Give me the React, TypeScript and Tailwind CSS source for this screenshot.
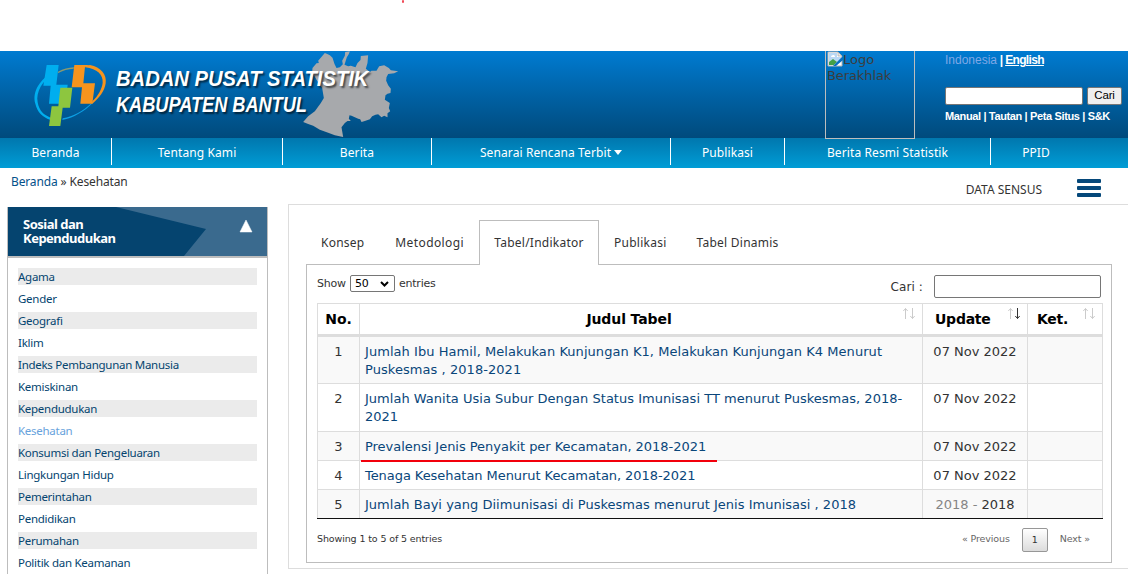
import type { ReactNode } from "react";

const nav = [
  { label: "Beranda", cls: "w-[112px]" },
  { label: "Tentang Kami", cls: "w-[171px]" },
  { label: "Berita", cls: "w-[149px]" },
  { label: "Senarai Rencana Terbit", cls: "w-[239px]", caret: true },
  { label: "Publikasi", cls: "w-[114px]" },
  { label: "Berita Resmi Statistik", cls: "w-[206px]" },
];

const topics = [
  "Agama", "Gender", "Geografi", "Iklim", "Indeks Pembangunan Manusia", "Kemiskinan",
  "Kependudukan", "Kesehatan", "Konsumsi dan Pengeluaran", "Lingkungan Hidup",
  "Pemerintahan", "Pendidikan", "Perumahan", "Politik dan Keamanan",
];

type Row = { lines: string[]; date: ReactNode; h: string; tracking: string; marked?: boolean };

const rows: Row[] = [
  {
    lines: ["Jumlah Ibu Hamil, Melakukan Kunjungan K1, Melakukan Kunjungan K4 Menurut", "Puskesmas , 2018-2021"],
    date: "07 Nov 2022",
    h: "h-[47px]",
    tracking: "tracking-[0.055px]",
  },
  {
    lines: ["Jumlah Wanita Usia Subur Dengan Status Imunisasi TT menurut Puskesmas, 2018-", "2021"],
    date: "07 Nov 2022",
    h: "h-12",
    tracking: "tracking-[0.015px]",
  },
  {
    lines: ["Prevalensi Jenis Penyakit per Kecamatan, 2018-2021"],
    date: "07 Nov 2022",
    h: "h-[29px]",
    tracking: "tracking-[-0.03px]",
    marked: true,
  },
  {
    lines: ["Tenaga Kesehatan Menurut Kecamatan, 2018-2021"],
    date: "07 Nov 2022",
    h: "h-[29px]",
    tracking: "tracking-[-0.06px]",
  },
  {
    lines: ["Jumlah Bayi yang Diimunisasi di Puskesmas menurut Jenis Imunisasi , 2018"],
    date: (<><span className="text-[#858585]">2018 - </span>2018</>),
    h: "h-[29px]",
    tracking: "tracking-[0.01px]",
  },
];

function Logo() {
  return (
    <svg viewBox="0 0 240 210" className="h-[70px] w-20 shrink-0">
      <path d="M70 36 C32 55 5 95 16 131 C22 157 38 171 60 179 L62 173 C42 166 27 152 23 127 C17 96 38 60 70 42Z" fill="#00aeef" />
      <path d="M97 180 C130 174 164 154 188 129 L182 131 C160 152 130 169 98 175Z" fill="#0c9fe4" />
      <path d="M160 20 L180 15 C213 22 231 43 227 70 C224 93 207 115 185 133 L187 124 C204 108 216 87 218 68 C220 45 202 26 166 22Z" fill="#f7941e" />
      <path d="M84 35 C100 26 115 23 132 22 L131 26 C114 27 99 31 83 40Z" fill="#8a9a72" />
      <path d="M50 15H86L79 74H113L106 131H57L62 77H40Z" fill="#00aeef" />
      <path d="M133 15H180L165 20L160 70H195L187 131H151L156 82H125Z" fill="#f7941e" />
      <path d="M91 83H127L120 143H98L91 198H57L65 139H85Z" fill="#8dc63f" />
    </svg>
  );
}

function RegionMap() {
  return (
    <svg viewBox="0 0 302 267" className="absolute left-[298px] top-[-3px] h-[89px] w-[101px]">
      <path
        d="M141 12L155 10L152 18L146 28L139 50L150 55L158 53L172 58L178 45L187 36L188 24L210 22L208 45L203 62L215 72L220 68L235 68L243 55L258 52L272 60L278 67L300 70L288 76L270 78L265 88L264 98L270 112L278 122L277 135L268 137L262 142L260 155L275 165L272 180L276 190L268 196L268 208L258 203L250 208L245 203L240 199L232 200L222 205L215 214L200 219L190 222L186 214L180 212L160 203L154 202L152 212L158 219L148 219L140 225L130 238L135 267L110 262L90 254L65 245L45 233L30 228L15 222L30 205L50 190L68 165L77 150L72 120L55 95L42 72L43 60L55 46L62 45L60 38L80 15L89 19L95 22L103 29L109 48L115 60L125 58L134 49L132 38L140 23Z"
        fill="#a7a9ac"
      />
    </svg>
  );
}

function BrokenImage() {
  return (
    <svg viewBox="0 0 16 16" className="inline-block h-4 w-4 align-[-3px]">
      <path d="M1 1H11L15 5V15H1Z" fill="#fff" stroke="#b5b5b5" />
      <path d="M2 2H10V6H14V9L8 13H2Z" fill="#b9d8f4" />
      <path d="M2 14V11L6 8L10 11L7 14Z" fill="#43a047" />
      <path d="M4 6C4 4 8 3 8 6Z" fill="#fff" />
      <path d="M16 5L6 15H9L16 9Z" fill="#0870c3" />
      <path d="M11 1V5H15Z" fill="#e8e8e8" stroke="#a8a8a8" strokeWidth=".7" />
    </svg>
  );
}

function Sort({ desc = false }: { desc?: boolean }) {
  return (
    <svg viewBox="0 0 12 13" className="h-[13px] w-3" fill="none">
      <path d="M2.500 12V1.500M.3 4L2.500 1.500L4.700 4" stroke="#cbcbcb" />
      <path d="M9.500 1V11.500M7.300 9L9.500 11.500L11.700 9" stroke={desc ? "#333" : "#cbcbcb"} />
    </svg>
  );
}

function Header() {
  return (
    <header className="relative z-10 flex h-[87px] bg-linear-to-b from-[#007bd1] to-[#004a7c]">
      <RegionMap />
      <div className="relative flex w-[825px] pl-[30px] pt-[9px]">
        <Logo />
        <div className="pl-[6px] pt-[6px] font-['Liberation_Sans'] text-[22px] font-bold italic leading-[26px] text-white [text-shadow:2px_2px_2px_#00000099]">
          <div className="origin-left scale-x-[0.918] whitespace-nowrap">BADAN PUSAT STATISTIK</div>
          <div className="origin-left scale-x-[0.825] whitespace-nowrap">KABUPATEN BANTUL</div>
        </div>
      </div>
      <div className="h-[88px] w-[90px] shrink-0 border border-t-0 border-[#bdbdbd] pl-px font-['DejaVu_Sans'] text-[13px] leading-4 text-[#3d3d3d]">
        <div className="whitespace-nowrap"><BrokenImage />Logo</div>
        <div className="tracking-[-0.1px]">Berakhlak</div>
      </div>
      <div className="flex flex-col pl-[30px] font-['Liberation_Sans'] text-white">
        <div className="pt-[2px] text-[12px] leading-[14px]">
          <span className="text-[#7fa8e6]">Indonesia</span>
          <b className="tracking-[-0.65px]"> | <span className="underline">English</span></b>
        </div>
        <div className="mt-5 flex gap-1">
          <div className="h-[18px] w-[138px] rounded-[2px] border border-[#767676] bg-white" />
          <div className="flex h-[18px] w-[35px] items-center justify-center rounded-[2px] border border-[#767676] bg-[#efefef] text-[11.5px] tracking-[-0.2px] text-black">Cari</div>
        </div>
        <div className="mt-[5px] whitespace-nowrap text-[11px] font-bold leading-[13px] tracking-[-0.36px]">Manual | Tautan | Peta Situs | S&amp;K</div>
      </div>
    </header>
  );
}

function NavBar() {
  return (
    <nav className="flex h-[30px] bg-linear-to-b from-[#0077ae] to-[#009dd6] font-['Noto_Sans'] text-[12px] tracking-[0.1px] text-white">
      {nav.map((n) => (
        <div key={n.label} className={`${n.cls} flex h-[27px] items-center justify-center border-r border-white pt-[2px] whitespace-nowrap`}>
          {n.label}
          {n.caret && (
            <svg viewBox="0 0 8 5" className="ml-[3px] h-[5px] w-2"><path d="M0 0H8L4 5Z" fill="#fff" /></svg>
          )}
        </div>
      ))}
      <div className="flex h-[27px] w-[90px] items-center justify-center pt-[2px]">PPID</div>
    </nav>
  );
}

function Sidebar() {
  return (
    <aside className="mt-[2px] h-[380px] w-[261px] shrink-0 border-x border-[#bdbdbd] font-['Noto_Sans']">
      <div className="relative h-[51px] border-b-2 border-[#bdbdbd] bg-[#05446f]">
        <svg viewBox="0 0 259 49" className="absolute inset-0 h-[49px] w-[259px]">
          <path d="M108 0H259V49H176L198 22Z" fill="#3a6a8e" />
          <path d="M232 25L238 13L244 25Z" fill="#fff" stroke="#fff" strokeWidth=".5" />
        </svg>
        <div className="relative pl-[15px] pt-[10px] text-[13px] font-bold leading-[14px] tracking-[-0.5px] text-white">
          Sosial dan<br />Kependudukan
        </div>
      </div>
      <ul className="flex flex-col gap-[5px] px-[10px] pt-[10px]">
        {topics.map((t) => (
          <li key={t} className="h-[17px] whitespace-nowrap text-[11.5px] leading-[18px] tracking-[-0.27px] text-[#04446f] odd:bg-[#ebebeb]">
            <span className={t === "Kesehatan" ? "text-[#67a2dc]" : ""}>{t}</span>
          </li>
        ))}
      </ul>
    </aside>
  );
}

function TablePanel() {
  return (
    <div className="h-[298px] w-[806px] border border-t-0 border-[#bdbdbd] pl-[10px] font-['DejaVu_Sans'] text-[#333]">
      <div className="flex h-[38px] w-[784px] justify-between text-[11px]">
        <div className="mt-[10px] flex h-[17px] items-center gap-1 tracking-[-0.2px]">
          <span className="pt-[2px]">Show</span>
          <div className="flex h-[17px] w-[45px] items-center justify-between rounded-[2px] border border-[#767676] pl-1 pr-[5px] text-black">
            <span className="pt-[2px]">50</span>
            <svg viewBox="0 0 9 6" className="h-[6px] w-[9px]"><path d="M1 1L4.500 4.500L8 1" fill="none" stroke="#000" strokeWidth="2" /></svg>
          </div>
          <span className="pt-[2px]">entries</span>
        </div>
        <div className="mt-[10px] flex h-[23px] items-center gap-[11px] text-[12px]">
          <span className="tracking-[0.1px]">Cari :</span>
          <div className="h-[23px] w-[167px] rounded-[2px] border border-[#767676]" />
        </div>
      </div>
      <div className="w-[786px]">
        <div className="grid h-[34px] grid-cols-[42px_563px_105px_76px] border-b-[3px] border-t border-[#ddd] text-[14px] font-bold tracking-[-0.1px] text-black">
          <div className="flex items-center justify-center border-l border-[#ddd]">No.</div>
          <div className="relative flex items-center justify-center border-l border-[#ddd] pr-[24px]">
            Judul Tabel
            <span className="absolute right-[7px] top-[3px]"><Sort /></span>
          </div>
          <div className="relative flex items-center border-l border-[#ddd] pl-3 tracking-[-0.25px]">
            Update
            <span className="absolute right-[7px] top-[3px]"><Sort desc /></span>
          </div>
          <div className="relative flex items-center border-x border-[#ddd] pl-[9px] tracking-[-0.25px]">
            Ket.
            <span className="absolute right-[7px] top-[3px]"><Sort /></span>
          </div>
        </div>
        {rows.map((r, i) => (
          <div
            key={i}
            className={`${r.h} ${r.marked ? "z-10" : ""} relative grid grid-cols-[42px_563px_105px_76px] border-b border-[#ddd] text-[13px] leading-[18px] last:border-[#111] odd:bg-white even:bg-[#f9f9f9]`}
          >
            <div className="border-l border-[#ddd] pt-[6px] text-center">{i + 1}</div>
            <div className={`${r.tracking} border-l border-[#ddd] pl-[5px] pt-[6px] whitespace-nowrap text-[#09467a]`}>
              {r.lines.map((l) => (<div key={l}>{l}</div>))}
            </div>
            <div className="border-l border-[#ddd] pt-[6px] text-center whitespace-nowrap">{r.date}</div>
            <div className="border-x border-[#ddd]" />
            {r.marked && <div className="absolute bottom-[-2px] left-[44px] h-[2px] w-[356px] bg-[#f2000c]" />}
          </div>
        ))}
      </div>
      <div className="flex h-10 w-[785px] items-center text-[9.5px] tracking-[-0.12px]">
        <span>Showing 1 to 5 of 5 entries</span>
        <span className="ml-auto text-[#666]">« Previous</span>
        <span className="ml-3 mt-[2px] flex h-6 w-[26px] items-center justify-center rounded-[2px] border border-[#979797] bg-linear-to-b from-white to-[#dcdcdc]">1</span>
        <span className="ml-3 mr-[12px] text-[#666]">Next »</span>
      </div>
    </div>
  );
}

function Tabs() {
  return (
    <div className="flex h-[45px] w-[806px] font-['Noto_Sans'] text-[12px] tracking-[0.25px] text-[#333]">
      <div className="flex w-[173px] justify-between border-b border-[#bdbdbd] pl-[15px] pr-[15px] leading-[46px]">
        <span>Konsep</span>
        <span className="tracking-[0.4px]">Metodologi</span>
      </div>
      <div className="w-[120px] border border-b-0 border-[#bdbdbd] text-center leading-[44px] whitespace-nowrap">Tabel/Indikator</div>
      <div className="flex flex-1 gap-[30px] border-b border-[#bdbdbd] pl-[15px] leading-[46px]">
        <span>Publikasi</span>
        <span>Tabel Dinamis</span>
      </div>
    </div>
  );
}

export default function App() {
  return (
    <div className="h-[574px] w-[1128px] overflow-hidden bg-white">
      <div className="h-[51px] pl-[402px]">
        <div className="h-[3px] w-[2px] rounded-full bg-[#f04b58]" />
      </div>
      <Header />
      <NavBar />
      <div className="flex h-[37px] justify-between font-['Noto_Sans'] text-[12px] text-[#333]">
        <div className="pl-[11px] pt-[5px] leading-[18px] tracking-[-0.14px]"><span className="text-[#04518a]">Beranda</span> » Kesehatan</div>
        <div className="flex items-start pr-[27px]">
          <span className="pt-[13px] leading-[18px]">DATA SENSUS</span>
          <div className="ml-[35px] mt-[11px] flex w-6 flex-col gap-[3px]">
            <div className="h-1 rounded-[1px] bg-[#05487a]" />
            <div className="h-1 rounded-[1px] bg-[#05487a]" />
            <div className="h-1 rounded-[1px] bg-[#05487a]" />
          </div>
        </div>
      </div>
      <div className="flex gap-5 pl-[7px]">
        <Sidebar />
        <main className="mt-[-1px] h-[365px] w-[850px] shrink-0 border border-[#ddd] pl-[17px] pt-[15px]">
          <Tabs />
          <TablePanel />
        </main>
      </div>
    </div>
  );
}
